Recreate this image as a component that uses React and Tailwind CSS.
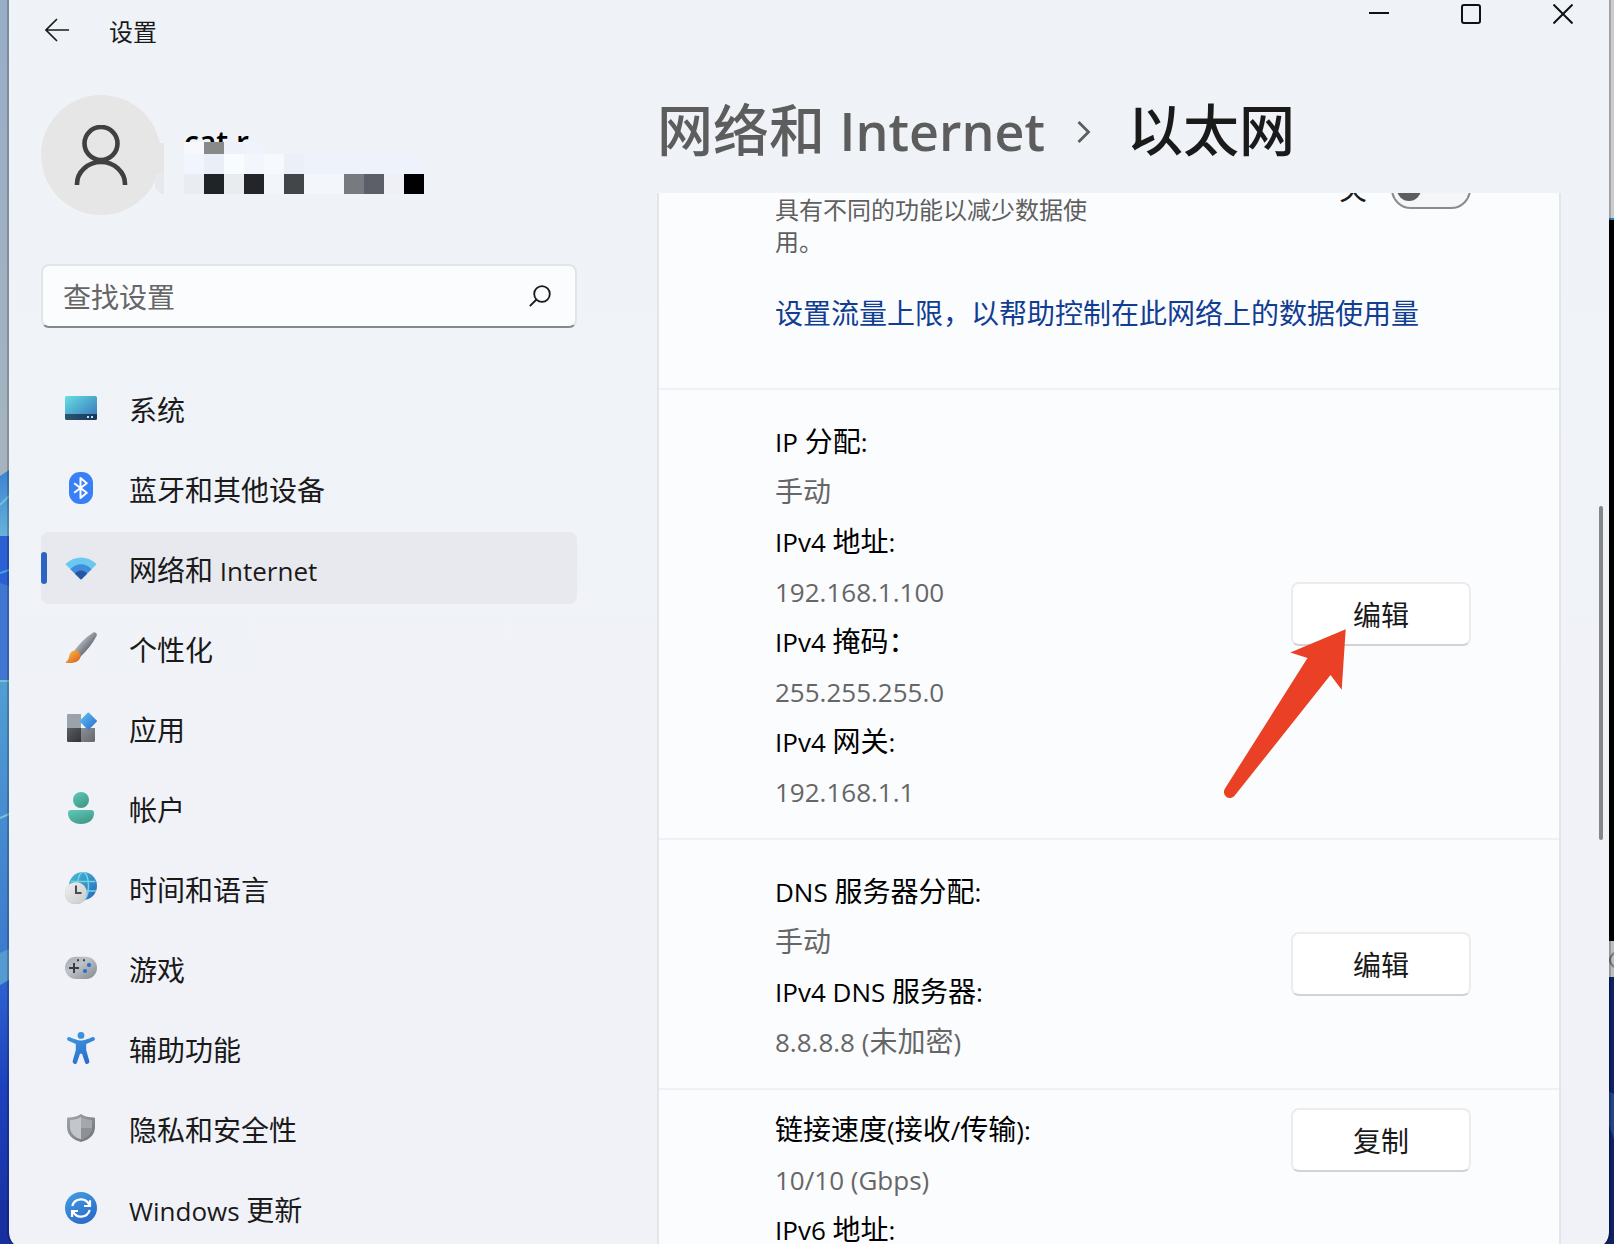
import { useState } from "react";

const SystemIcon = () => (
  <svg viewBox="0 0 32 32" className="size-8 shrink-0" aria-hidden="true">
    <defs>
      <linearGradient id="sysScreen" x1="0" y1="0" x2="1" y2="1">
        <stop offset="0" stopColor="#66dfe2" />
        <stop offset="1" stopColor="#356fb9" />
      </linearGradient>
      <linearGradient id="sysBar" x1="0" y1="0" x2="1" y2="0">
        <stop offset="0" stopColor="#2b566b" />
        <stop offset="1" stopColor="#173560" />
      </linearGradient>
    </defs>
    <rect x="0" y="4" width="32" height="24" rx="1.8" fill="url(#sysScreen)" />
    <path d="M0 22h32v4.200a1.800 1.800 0 0 1-1.800 1.800H1.800A1.800 1.800 0 0 1 0 26.200z" fill="url(#sysBar)" />
    <path d="M22 24h2v2h-2zM26 24h2v2h-2z" fill="#c9dcea" />
  </svg>
);

const BluetoothIcon = () => (
  <svg viewBox="0 0 32 32" className="size-8 shrink-0" aria-hidden="true">
    <rect x="4" y="0" width="24" height="32" rx="11" fill="#3880f6" />
    <path
      d="M9.200 11.200L21.800 20.800L15.500 26V6L21.800 11.200L9.200 20.800"
      fill="none"
      stroke="#fff"
      strokeWidth="2"
      strokeLinejoin="round"
    />
  </svg>
);

const WifiIcon = () => (
  <svg viewBox="0 0 32 32" className="size-8 shrink-0" aria-hidden="true">
    <path d="M16 27.600L.9 12.800Q.4 12.200 1 11.600C9.500 3.300 22.500 3.300 31 11.600Q31.600 12.200 31.100 12.800z" fill="#6ac9f1" />
    <path d="M16 27.600L5.400 17.200C11.500 10.600 20.500 10.600 26.600 17.200z" fill="#3f8ddb" />
    <path d="M15.200 27L9.900 21.700C13.500 17.300 18.500 17.300 22.100 21.700L16.800 27Q16 27.800 15.200 27z" fill="#2556a3" />
  </svg>
);

const BrushIcon = () => (
  <svg viewBox="0 0 32 32" className="size-8 shrink-0" aria-hidden="true">
    <defs>
      <linearGradient id="brushHandle" x1=".3" y1=".3" x2=".65" y2=".65">
        <stop offset="0" stopColor="#b4b9c0" />
        <stop offset="1" stopColor="#6a6f77" />
      </linearGradient>
      <linearGradient id="brushTip" x1="0" y1="0" x2="1" y2="1">
        <stop offset=".2" stopColor="#f6b145" />
        <stop offset="1" stopColor="#d8531c" />
      </linearGradient>
    </defs>
    <path d="M9.500 18.600C14.500 11.500 20.500 5.500 27.800.7C30.600-.6 32.800 1.600 31.400 4.300C27.500 11.800 22 18.500 15.200 25z" fill="url(#brushHandle)" />
    <path d="M8.300 18.800C12.500 17.500 16.500 21 15.500 25C14.300 30 8.500 31.600 1.500 31C.5 30.800.5 30 1.400 29.500C5 27.500 2.800 21 8.300 18.800z" fill="url(#brushTip)" />
  </svg>
);

const AppsIcon = () => (
  <svg viewBox="0 0 32 32" className="size-8 shrink-0" aria-hidden="true">
    <defs>
      <linearGradient id="appsDiamond" x1="0" y1="0" x2="1" y2="1">
        <stop offset="0" stopColor="#63c3f3" />
        <stop offset="1" stopColor="#266bd0" />
      </linearGradient>
      <linearGradient id="appsDark" x1="0" y1="0" x2="1" y2="1">
        <stop offset="0" stopColor="#5a5f64" />
        <stop offset="1" stopColor="#313437" />
      </linearGradient>
      <linearGradient id="appsMid" x1="0" y1="0" x2="1" y2="1">
        <stop offset="0" stopColor="#8d9197" />
        <stop offset="1" stopColor="#63676c" />
      </linearGradient>
    </defs>
    <path d="M3.200 2H16v14H2V3.200A1.200 1.200 0 0 1 3.200 2z" fill="#9aa2ac" />
    <path d="M2 16h14v14H3.200A1.200 1.200 0 0 1 2 28.800z" fill="url(#appsDark)" />
    <path d="M16 16h14v12.800a1.200 1.200 0 0 1-1.200 1.200H16z" fill="url(#appsMid)" />
    <path d="M22.600.8a1 1 0 0 1 1.400 0l7.700 7.600a1 1 0 0 1 0 1.300L24 17.400a1 1 0 0 1-1.400 0L15 9.700a1 1 0 0 1 0-1.300z" fill="url(#appsDiamond)" />
  </svg>
);

const AccountIcon = () => (
  <svg viewBox="0 0 32 32" className="size-8 shrink-0" aria-hidden="true">
    <defs>
      <linearGradient id="accountFill" x1="0" y1="0" x2=".6" y2="1">
        <stop offset="0" stopColor="#5fcbb6" />
        <stop offset="1" stopColor="#41998a" />
      </linearGradient>
    </defs>
    <circle cx="16" cy="8" r="8" fill="url(#accountFill)" />
    <path d="M6 18h20a3 3 0 0 1 3 3C29 28 23.500 32 16 32S3 28 3 21a3 3 0 0 1 3-3z" fill="url(#accountFill)" />
  </svg>
);

const TimeIcon = () => (
  <svg viewBox="0 0 32 32" className="size-8 shrink-0" aria-hidden="true">
    <defs>
      <linearGradient id="globeFill" x1="0" y1="0" x2="1" y2="1">
        <stop offset=".1" stopColor="#45b6cf" />
        <stop offset="1" stopColor="#2b66bb" />
      </linearGradient>
      <linearGradient id="clockFill" x1="0" y1="0" x2="1" y2="1">
        <stop offset="0" stopColor="#f1f1f1" />
        <stop offset="1" stopColor="#c9c9cb" />
      </linearGradient>
    </defs>
    <circle cx="18" cy="14" r="14" fill="url(#globeFill)" />
    <g fill="none" stroke="#70d6e6" strokeWidth="1.5">
      <path d="M5.500 9.500h25M6 19h25" />
      <ellipse cx="18" cy="14" rx="5.500" ry="14" />
    </g>
    <circle cx="11" cy="21.400" r="11" fill="#a9abb0" opacity=".6" />
    <circle cx="11" cy="21" r="10.800" fill="url(#clockFill)" />
    <path d="M11 13.500V21h5.500" fill="none" stroke="#4b4b4b" strokeWidth="2" />
  </svg>
);

const GamingIcon = () => (
  <svg viewBox="0 0 32 32" className="size-8 shrink-0" aria-hidden="true">
    <defs>
      <linearGradient id="padFill" x1="0" y1="0" x2="1" y2="1">
        <stop offset="0" stopColor="#a6abb3" />
        <stop offset=".4" stopColor="#bfc3c9" />
        <stop offset="1" stopColor="#83888f" />
      </linearGradient>
    </defs>
    <rect x="0" y="4.700" width="32" height="22.300" rx="11" fill="url(#padFill)" />
    <path d="M9 11v10M4 16h10" stroke="#3a3c40" strokeWidth="2" />
    <path d="M12 7.200h2v2h-2zM18 7.200h2v2h-2z" fill="#3a3c40" />
    <circle cx="24" cy="13" r="2.100" fill="#2470cc" />
    <circle cx="20" cy="19" r="2.100" fill="#2470cc" />
  </svg>
);

const AccessibilityIcon = () => (
  <svg viewBox="0 0 32 32" className="size-8 shrink-0" aria-hidden="true">
    <defs>
      <linearGradient id="accessFill" gradientUnits="userSpaceOnUse" x1="6" y1="0" x2="22" y2="32">
        <stop offset="0" stopColor="#3f9be0" />
        <stop offset="1" stopColor="#2b6ccb" />
      </linearGradient>
    </defs>
    <circle cx="16" cy="3.400" r="3.400" fill="url(#accessFill)" />
    <path
      d="M4.300 5.100C8 6.500 12.500 8.600 16 8.600S24 6.500 27.700 5.100C30 4.700 30.800 8 28.600 8.800L21.200 11.900V18L24.300 29C24.700 32 20.900 33 20 30.400L17 21.800H15L12 30.400C11.100 33 7.300 32 7.700 29L10.800 18V11.900L3.400 8.800C1.200 8 2 4.700 4.300 5.100z"
      fill="url(#accessFill)"
    />
  </svg>
);

const ShieldIcon = () => (
  <svg viewBox="0 0 32 32" className="size-8 shrink-0" aria-hidden="true">
    <defs>
      <linearGradient id="shieldEdge" x1="0" y1="0" x2="1" y2="1">
        <stop offset="0" stopColor="#a3a7ac" />
        <stop offset="1" stopColor="#6d7075" />
      </linearGradient>
    </defs>
    <path d="M16 2C20 4.600 24 5.500 29 5.500a1 1 0 0 1 1 1V15C30 23 24 28 16 30C8 28 2 23 2 15V6.500a1 1 0 0 1 1-1C8 5.500 12 4.600 16 2z" fill="url(#shieldEdge)" />
    <path d="M16 5C12.500 7 9 7.900 5 8V15C5 21 9.500 25.500 16 27.200z" fill="#c3c6ca" />
    <path d="M16 5C19.500 7 23 7.900 27 8V15C27 21 22.500 25.500 16 27.200z" fill="#a4a7ac" />
    <path d="M16 16h11C26.500 21.500 22 25.700 16 27.200z" fill="#8d9095" />
  </svg>
);

const UpdateIcon = () => (
  <svg viewBox="0 0 32 32" className="size-8 shrink-0" aria-hidden="true">
    <defs>
      <linearGradient id="updateFill" x1="0" y1="0" x2=".6" y2="1">
        <stop offset="0" stopColor="#459fe2" />
        <stop offset="1" stopColor="#2c6ccb" />
      </linearGradient>
    </defs>
    <circle cx="16" cy="16" r="16" fill="url(#updateFill)" />
    <g fill="none" stroke="#fff" strokeWidth="2.200">
      <path d="M7.300 14A9 9 0 0 1 24.200 12.800M25 8.200V14H19" />
      <path d="M24.700 18A9 9 0 0 1 7.800 19.200M7 25V19H13" />
    </g>
  </svg>
);

const navItems = [
  { label: "系统", icon: SystemIcon },
  { label: "蓝牙和其他设备", icon: BluetoothIcon },
  { label: "网络和 Internet", icon: WifiIcon },
  { label: "个性化", icon: BrushIcon },
  { label: "应用", icon: AppsIcon },
  { label: "帐户", icon: AccountIcon },
  { label: "时间和语言", icon: TimeIcon },
  { label: "游戏", icon: GamingIcon },
  { label: "辅助功能", icon: AccessibilityIcon },
  { label: "隐私和安全性", icon: ShieldIcon },
  { label: "Windows 更新", icon: UpdateIcon },
];

const ipRows = [
  ["IP 分配:", "手动"],
  ["IPv4 地址:", "192.168.1.100"],
  ["IPv4 掩码：", "255.255.255.0"],
  ["IPv4 网关:", "192.168.1.1"],
];

const dnsRows = [
  ["DNS 服务器分配:", "手动"],
  ["IPv4 DNS 服务器:", "8.8.8.8 (未加密)"],
];

const linkRows = [
  ["链接速度(接收/传输):", "10/10 (Gbps)"],
  ["IPv6 地址:", ""],
];

// Latin runs are set slightly smaller than the Chinese around them
const Mixed = ({ text }) =>
  text.split(/([\x20-\x7e]+)/).map((part, i) =>
    i % 2 ? (
      <span key={i} className="text-[26px] leading-none">
        {part}
      </span>
    ) : (
      part
    )
  );

const Details = ({ rows }) => (
  <dl className="pt-1 text-[28px] leading-[50px]">
    {rows.map(([label, value]) => (
      <div key={label}>
        <dt className="text-black">
          <Mixed text={label} />
        </dt>
        {value && (
          <dd className="text-[#666666]">
            <Mixed text={value} />
          </dd>
        )}
      </div>
    ))}
  </dl>
);

const ActionButton = ({ children }) => (
  <button className="h-16 w-[180px] rounded-lg border-2 border-[#ececed] border-b-[#d3d3d4] bg-white pt-0.5 text-[28px] text-[#1a1a1a]">
    {children}
  </button>
);

const Wallpaper = () => (
  <svg
    viewBox="0 0 1614 1244"
    preserveAspectRatio="none"
    className="absolute inset-0 h-full w-full"
    aria-hidden="true"
  >
    <defs>
      <linearGradient id="sky" x1="0" y1="0" x2="0" y2="1">
        <stop offset="0" stopColor="#98adc8" />
        <stop offset="1" stopColor="#a6b4be" />
      </linearGradient>
      <linearGradient id="petalA" x1="0" y1="0" x2="0" y2="1">
        <stop offset="0" stopColor="#3c82d2" />
        <stop offset="1" stopColor="#6ab5da" />
      </linearGradient>
      <linearGradient id="petalB" x1="0" y1="0" x2="0" y2="1">
        <stop offset="0" stopColor="#529ed2" />
        <stop offset="1" stopColor="#3c79cd" />
      </linearGradient>
      <linearGradient id="petalC" x1="0" y1="0" x2="0" y2="1">
        <stop offset="0" stopColor="#2e62cf" />
        <stop offset=".4" stopColor="#1d41bd" />
        <stop offset="1" stopColor="#18309f" />
      </linearGradient>
    </defs>
    <rect width="40" height="480" fill="url(#sky)" />
    <path d="M0 476L9 470V540H0z" fill="url(#petalA)" />
    <path d="M0 505L9 496" stroke="#6fc0da" strokeWidth="2" />
    <path d="M0 536H9V590H0z" fill="#2b60d4" />
    <path d="M0 573L9 570" stroke="#4da0dc" strokeWidth="2" />
    <path d="M0 583L9 586V681H0z" fill="#4177d2" />
    <path d="M0 681H9V960H0z" fill="url(#petalB)" />
    <path d="M0 681H9M0 818L9 814" stroke="#74c4d6" strokeWidth="2" />
    <path d="M0 953L9 949V985H0z" fill="#569bd0" />
    <path d="M0 985L9 980V1236L40 1244H0z" fill="url(#petalC)" />
    <path d="M0 1200H60V1244H0z" fill="#18309f" />
    <path d="M1604 0h10v218h-10z" fill="#cbcbcb" />
    <path d="M1604 218h10v2h-10z" fill="#2a7ad2" />
    <path d="M1604 220h10v721h-10z" fill="#000" />
    <path d="M1604 941h10v36h-10z" fill="#bdbdbd" />
    <path d="M1614 953Q1606 960 1614 967" fill="none" stroke="#777" strokeWidth="2" />
    <path d="M1580 1220H1604V977H1614V1244H1580z" fill="#0c2262" />
    <path d="M1604 1089L1614 1094V1140L1604 1110z" fill="#234486" />
  </svg>
);

// The name and mail address stay unreadable behind the blocks
const Mosaic = () => (
  <svg viewBox="0 0 280 52" className="absolute top-[47px] -left-[29px] h-[52px] w-[280px]" aria-hidden="true">
    <path d="M0 2l3 0l0-1h6v31H0z" fill="#e6e6e6" />
    <path d="M0 32h9v20H6L0 46z" fill="#e8e9ee" />
    <rect x="29" width="20" height="12" fill="#f7f7fc" />
    <rect x="49" width="20" height="12" fill="#888989" />
    <rect x="69" width="20" height="12" fill="#eef1f9" />
    <rect x="89" width="20" height="12" fill="#f0f3fc" />
    <rect x="29" y="12" width="20" height="20" fill="#f0f5fe" />
    <rect x="49" y="12" width="20" height="20" fill="#eaeff7" />
    <rect x="69" y="12" width="20" height="20" fill="#f7fcff" />
    <rect x="89" y="12" width="20" height="20" fill="#f3f7fd" />
    <rect x="109" y="12" width="20" height="20" fill="#f6f9fe" />
    <rect x="129" y="12" width="20" height="20" fill="#eaeff8" />
    <rect x="149" y="12" width="120" height="20" fill="#eef2fb" />
    <rect x="29" y="32" width="20" height="20" fill="#e9ecf0" />
    <rect x="49" y="32" width="20" height="20" fill="#1f2427" />
    <rect x="69" y="32" width="20" height="20" fill="#e8ecee" />
    <rect x="89" y="32" width="20" height="20" fill="#242529" />
    <rect x="109" y="32" width="20" height="20" fill="#f2f6fb" />
    <rect x="129" y="32" width="20" height="20" fill="#434648" />
    <rect x="149" y="32" width="40" height="20" fill="#f3f7fb" />
    <rect x="189" y="32" width="20" height="20" fill="#777a7e" />
    <rect x="209" y="32" width="20" height="20" fill="#5c5f68" />
    <rect x="229" y="32" width="20" height="20" fill="#eef0f6" />
    <rect x="249" y="32" width="20" height="20" fill="#000003" />
  </svg>
);

const Sidebar = () => {
  const [active, setActive] = useState("网络和 Internet");

  return (
    <aside className="w-[536px] shrink-0">
      <div className="flex gap-[23px] pt-[7px]">
        <div className="flex size-[120px] items-center justify-center rounded-full bg-[#e6e6e6]">
          <svg viewBox="0 0 60 60" className="size-[60px]" fill="none" stroke="#404040" strokeWidth="4.600" aria-hidden="true">
            <circle cx="30" cy="18.500" r="16.500" />
            <path d="M6 60V59A24 22 0 0 1 54 59V60" />
          </svg>
        </div>
        <div className="relative">
          <p className="pt-7 text-[30px] leading-[38px] font-semibold text-black">cat r</p>
          <Mosaic />
        </div>
      </div>

      <div className="mt-[49px] flex h-16 items-center rounded-lg border-2 border-[#e2e4e9] border-b-[#868789] bg-[#fbfcfe] pr-6 pl-5">
        <input
          type="text"
          aria-label="查找设置"
          placeholder="查找设置"
          className="h-full min-w-0 flex-1 pt-0.5 text-[28px] outline-none placeholder:text-[#666666]"
        />
        <svg viewBox="0 0 22 22" className="size-[22px]" fill="none" stroke="#1a1a1a" strokeWidth="1.800" aria-hidden="true">
          <circle cx="13" cy="9" r="7.800" />
          <path d="M7.500 14.500L.8 21.200" />
        </svg>
      </div>

      <nav className="mt-11 flex flex-col gap-2">
        {navItems.map(({ label, icon: Icon }) => (
          <a
            key={label}
            href="#"
            onClick={() => setActive(label)}
            className={`flex h-[72px] items-center rounded-lg text-[28px] text-[#1a1a1a] ${
              active === label ? "bg-[#e7e9ee]" : ""
            }`}
          >
            <span className={`h-8 w-[6px] rounded-full ${active === label ? "bg-[#2b65bf]" : ""}`} />
            <span className="flex items-center gap-8 pl-[18px]">
              <Icon />
              <span className="pt-1">
                <Mixed text={label} />
              </span>
            </span>
          </a>
        ))}
      </nav>
    </aside>
  );
};

const App = () => {
  const [metered, setMetered] = useState(false);

  return (
    <div
      lang="zh-CN"
      className="relative flex h-screen overflow-hidden font-['Open_Sans','Noto_Sans_CJK_SC',sans-serif]"
    >
      <Wallpaper />
      <div className="relative -mb-1 mr-[3px] ml-[7px] flex min-w-0 flex-1 flex-col overflow-hidden rounded-b-2xl border-x-2 border-black/20 bg-linear-to-b from-[#eff3f8] to-[#f1f2f8] bg-clip-padding">
        <header className="flex h-[88px] shrink-0 items-start justify-between pl-9">
          <div className="flex h-[60px] items-center gap-10">
            <button aria-label="返回">
              <svg viewBox="0 0 24 24" className="size-6" fill="none" stroke="#1a1a1a" strokeWidth="1.700" aria-hidden="true">
                <path d="M24 12H1M12 1L1 12L12 23" />
              </svg>
            </button>
            <span className="pt-1 text-2xl text-[#1a1a1a]">设置</span>
          </div>
          <div className="flex">
            <button aria-label="最小化" className="flex h-7 w-[92px] items-center justify-center">
              <svg viewBox="0 0 20 20" className="size-5" stroke="#111" strokeWidth="2" aria-hidden="true">
                <path d="M0 9H20" />
              </svg>
            </button>
            <button aria-label="最大化" className="flex h-7 w-[92px] items-center justify-center">
              <svg viewBox="0 0 20 20" className="size-5" fill="none" stroke="#111" strokeWidth="2" aria-hidden="true">
                <rect x="1" y="1" width="18" height="18" rx="2" />
              </svg>
            </button>
            <button aria-label="关闭" className="flex h-7 w-[92px] items-center justify-center">
              <svg viewBox="0 0 20 20" className="size-5" stroke="#111" strokeWidth="2" aria-hidden="true">
                <path d="M.5 .5L19.500 19.500M19.500 .5L.5 19.500" />
              </svg>
            </button>
          </div>
        </header>

        <div className="flex min-h-0 flex-1 pl-8">
          <Sidebar />

          <main className="ml-20 flex min-w-0 flex-1 flex-col">
            <h1 className="flex h-[105px] shrink-0 items-center pb-6 text-[56px] leading-none font-medium whitespace-nowrap">
              <a href="#" className="text-[#5d5d5d]">
                网络和 <span className="text-[52px] font-semibold">Internet</span>
              </a>
              <svg viewBox="0 0 14 30" className="mr-9 ml-8 h-[30px] w-[14px]" fill="none" stroke="#5d5d5d" strokeWidth="2.800" aria-hidden="true">
                <path d="M1.500 8L11.500 18L1.500 28" />
              </svg>
              <span className="text-[#1a1a1a]">以太网</span>
            </h1>

            <div className="flex min-h-0 flex-1">
              <div className="min-w-0 flex-1 divide-y-2 divide-[#eff1f6] overflow-hidden border-x-2 border-[#e3e5eb] bg-[#fbfcfe]">
                <section className="-mt-6 pr-[88px] pb-[50px] pl-[116px]">
                  <div className="flex items-start justify-between">
                    <p className="w-80 pt-[25px] text-2xl leading-8 text-[#5f5f5f]">
                      具有不同的功能以减少数据使用。
                    </p>
                    <label className="flex items-center gap-6 text-[28px] leading-10 text-[#1a1a1a]">
                      关
                      <input
                        type="checkbox"
                        role="switch"
                        checked={metered}
                        onChange={() => setMetered(!metered)}
                        className="flex h-10 w-20 appearance-none items-center rounded-full border-2 border-[#8a8b8c] bg-[#f5f6f8] px-1 before:size-6 before:rounded-full before:bg-[#5d5d5d] checked:justify-end"
                      />
                    </label>
                  </div>
                  <a href="#" className="mt-[30px] block text-[28px] leading-[50px] text-[#113d92]">
                    设置流量上限，以帮助控制在此网络上的数据使用量
                  </a>
                </section>

                <section className="flex items-center justify-between py-[22px] pr-[88px] pl-[116px]">
                  <Details rows={ipRows} />
                  <div className="relative">
                    <ActionButton>编辑</ActionButton>
                    <svg
                      viewBox="0 0 130 175"
                      className="pointer-events-none absolute top-[43px] -left-[71px] h-[175px] w-[130px]"
                      aria-hidden="true"
                    >
                      <path
                        d="M125.700 4.200L70.300 27.600L87.500 33L5 163.500A6 6 0 0 0 14.800 170.500L110.500 50L121.700 64.700z"
                        fill="#ea4126"
                      />
                    </svg>
                  </div>
                </section>

                <section className="flex items-center justify-between py-[22px] pr-[88px] pl-[116px]">
                  <Details rows={dnsRows} />
                  <ActionButton>编辑</ActionButton>
                </section>

                <section className="flex items-start justify-between pt-2.5 pr-[88px] pl-[116px]">
                  <Details rows={linkRows} />
                  <div className="pt-2">
                    <ActionButton>复制</ActionButton>
                  </div>
                </section>
              </div>

              {/* scrollbar */}
              <div className="mr-[6px] ml-[38px] flex w-1 flex-col pt-[313px]">
                <span className="h-[334px] rounded-full bg-[#858687]" />
              </div>
            </div>
          </main>
        </div>
      </div>
    </div>
  );
};

export default App;
